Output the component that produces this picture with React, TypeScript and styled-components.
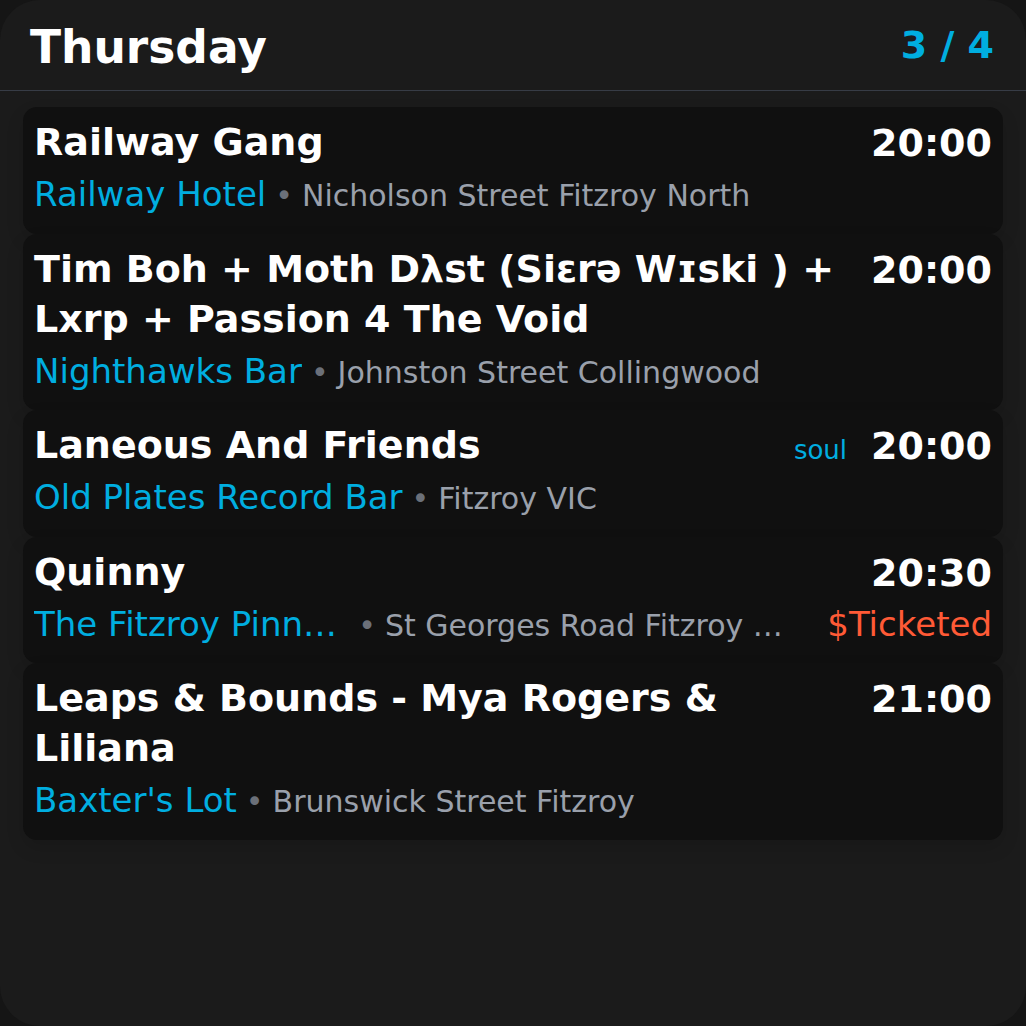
import React from "react";
import styled, { createGlobalStyle } from "styled-components";

const Global = createGlobalStyle`
  html, body { margin: 0; padding: 0; background: #151515; }
  body { font-family: "DejaVu Sans", "Noto Sans", sans-serif; }
  * { box-sizing: border-box; }
`;

const Screen = styled.div`
  width: 1026px;
  height: 1026px;
  background: #1b1b1b;
  border-radius: 40px;
  overflow: hidden;
  display: flex;
  flex-direction: column;
`;

const Header = styled.header`
  height: 91px;
  flex: none;
  display: flex;
  align-items: center;
  justify-content: space-between;
  padding: 0 32px 0 30px;
  border-bottom: 1.5px solid #373c46;
`;

const DayTitle = styled.h1`
  margin: 0;
  font-size: 45.5px;
  font-weight: 700;
  color: #ffffff;
  line-height: 1;
  padding-top: 5px;
`;

const Counter = styled.div`
  font-size: 38px;
  font-weight: 700;
  color: #00aee0;
  line-height: 1;
`;

const List = styled.div`
  display: flex;
  flex-direction: column;
  padding: 16px 23px;
`;

const Card = styled.div`
  background: #101010;
  border-radius: 14px;
  padding: 10px 11px 13.5px;
  box-shadow: 0 8px 18px rgba(0, 0, 0, 0.12);
`;

const TopRow = styled.div`
  display: flex;
  align-items: flex-start;
  gap: 24px;
`;

const EventTitle = styled.div`
  flex: 1;
  min-width: 0;
  font-size: 38px;
  font-weight: 700;
  line-height: 50px;
  color: #ffffff;
`;

const RightGroup = styled.div`
  flex: none;
  display: flex;
  align-items: baseline;
  gap: 24px;
  padding-top: 3px;
`;

const Tag = styled.span`
  font-size: 26px;
  line-height: 40px;
  color: #00aee0;
`;

const Time = styled.span`
  font-size: 38px;
  font-weight: 700;
  line-height: 47px;
  color: #ffffff;
`;

const MetaRow = styled.div`
  display: flex;
  align-items: baseline;
  margin-top: 1px;
  white-space: nowrap;
`;

const Venue = styled.span`
  flex: 0 1 auto;
  min-width: 0;
  overflow: hidden;
  text-overflow: ellipsis;
  font-size: 34px;
  line-height: 52px;
  color: #00aee0;
`;

const Address = styled.span`
  flex: 0 1 auto;
  min-width: 0;
  overflow: hidden;
  text-overflow: ellipsis;
  font-size: 30px;
  line-height: 48px;
  color: #9aa0ab;
  padding-left: 9px;
`;

const Dot = styled.span`
  color: #6b7079;
  margin-right: 9px;
`;

const Price = styled.span`
  flex: none;
  margin-left: auto;
  padding-left: 24px;
  font-size: 34px;
  line-height: 52px;
  color: #ff5a36;
`;

type EventItem = {
  title: string;
  time: string;
  venue: string;
  address: string;
  tag?: string;
  price?: string;
};

const events: EventItem[] = [
  {
    title: "Railway Gang",
    time: "20:00",
    venue: "Railway Hotel",
    address: "Nicholson Street Fitzroy North",
  },
  {
    title: "Tim Boh + Moth Dλst (Siɛrə Wɪski ) + Lxrp + Passion 4 The Void",
    time: "20:00",
    venue: "Nighthawks Bar",
    address: "Johnston Street Collingwood",
  },
  {
    title: "Laneous And Friends",
    time: "20:00",
    venue: "Old Plates Record Bar",
    address: "Fitzroy VIC",
    tag: "soul",
  },
  {
    title: "Quinny",
    time: "20:30",
    venue: "The Fitzroy Pinnacle",
    address: "St Georges Road Fitzroy North",
    price: "$Ticketed",
  },
  {
    title: "Leaps & Bounds - Mya Rogers & Liliana",
    time: "21:00",
    venue: "Baxter's Lot",
    address: "Brunswick Street Fitzroy",
  },
];

export default function App() {
  return (
    <>
      <Global />
      <Screen>
        <Header>
          <DayTitle>Thursday</DayTitle>
          <Counter>3 / 4</Counter>
        </Header>
        <List>
          {events.map((e) => (
            <Card key={e.title}>
              <TopRow>
                <EventTitle>{e.title}</EventTitle>
                <RightGroup>
                  {e.tag && <Tag>{e.tag}</Tag>}
                  <Time>{e.time}</Time>
                </RightGroup>
              </TopRow>
              <MetaRow>
                <Venue>{e.venue}</Venue>
                <Address>
                  <Dot>•</Dot>
                  {e.address}
                </Address>
                {e.price && <Price>{e.price}</Price>}
              </MetaRow>
            </Card>
          ))}
        </List>
      </Screen>
    </>
  );
}
